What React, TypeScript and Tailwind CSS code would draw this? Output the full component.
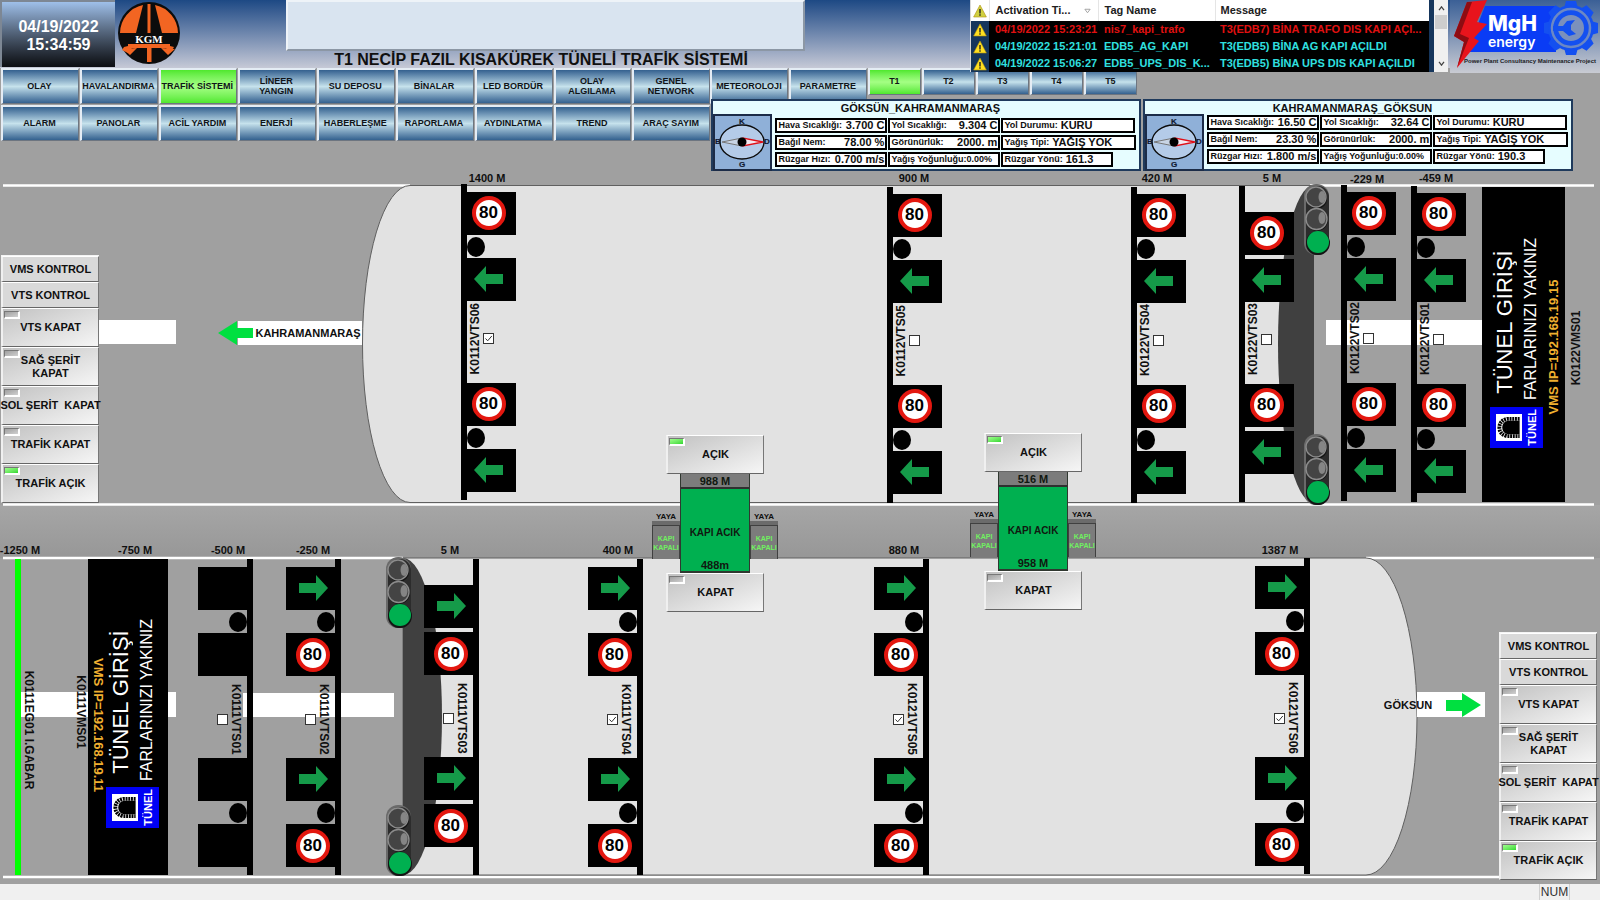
import { ReactNode } from 'react'
import clsx from 'clsx'

// the diagram starts below the weather panels
const TOP = 171

const at = (x: number, y: number) => ({ left: `${x / 16}%`, top: y - TOP })

const navTop = ['OLAY', 'HAVALANDIRMA', 'TRAFİK SİSTEMİ', 'LİNEER\nYANGIN', 'SU DEPOSU', 'BİNALAR', 'LED BORDÜR', 'OLAY\nALGILAMA', 'GENEL\nNETWORK']
const navBottom = ['ALARM', 'PANOLAR', 'ACİL YARDIM', 'ENERJİ', 'HABERLEŞME', 'RAPORLAMA', 'AYDINLATMA', 'TREND', 'ARAÇ SAYIM']
const tunnels = ['T1', 'T2', 'T3', 'T4', 'T5']

const alarms = [
    { time: '04/19/2022 15:23:21', tag: 'nis7_kapi_trafo', message: 'T3(EDB7) BİNA TRAFO DIS KAPI AÇI...', color: 'text-[#e01010]' },
    { time: '04/19/2022 15:21:01', tag: 'EDB5_AG_KAPI', message: 'T3(EDB5) BİNA AG KAPI AÇILDI', color: 'text-[#30e0e0]' },
    { time: '04/19/2022 15:06:27', tag: 'EDB5_UPS_DIS_K...', message: 'T3(EDB5) BİNA UPS DIS KAPI AÇILDI', color: 'text-[#30e0e0]' },
]

const controls = [
    { text: 'VTS KAPAT', on: false },
    { text: 'SAĞ ŞERİT\nKAPAT', on: false },
    { text: 'SOL ŞERİT  KAPAT', on: false },
    { text: 'TRAFİK KAPAT', on: false },
    { text: 'TRAFİK AÇIK', on: true },
]

type PostData = {
    id: string
    x: number
    y: number
    pad: number
    checked?: boolean
    short?: boolean
    blank?: boolean
}

const upperPosts: PostData[] = [
    { id: 'K0112VTS06', x: 461, y: 184, pad: 8, checked: true },
    { id: 'K0112VTS05', x: 887, y: 187, pad: 7 },
    { id: 'K0122VTS04', x: 1131, y: 187, pad: 7 },
    { id: 'K0122VTS03', x: 1239, y: 186, pad: 26, short: true },
    { id: 'K0122VTS02', x: 1341, y: 185, pad: 7 },
    { id: 'K0122VTS01', x: 1411, y: 186, pad: 7 },
]

const lowerPosts: PostData[] = [
    { id: 'K0111VTS01', x: 198, y: 559, pad: 8, blank: true },
    { id: 'K0111VTS02', x: 286, y: 559, pad: 8 },
    { id: 'K0111VTS03', x: 424, y: 559, pad: 26, short: true },
    { id: 'K0111VTS04', x: 588, y: 559, pad: 8, checked: true },
    { id: 'K0121VTS05', x: 874, y: 559, pad: 8, checked: true },
    { id: 'K0121VTS06', x: 1255, y: 558, pad: 8, checked: true },
]

const distances = [
    { text: '1400 M', x: 487, y: 178 },
    { text: '900 M', x: 914, y: 178 },
    { text: '420 M', x: 1157, y: 178 },
    { text: '5 M', x: 1272, y: 178 },
    { text: '-229 M', x: 1367, y: 179 },
    { text: '-459 M', x: 1436, y: 178 },
    { text: '-1250 M', x: 20, y: 550 },
    { text: '-750 M', x: 135, y: 550 },
    { text: '-500 M', x: 228, y: 550 },
    { text: '-250 M', x: 313, y: 550 },
    { text: '5 M', x: 450, y: 550 },
    { text: '400 M', x: 618, y: 550 },
    { text: '880 M', x: 904, y: 550 },
    { text: '1387 M', x: 1280, y: 550 },
]

function NavButton({ text, active, small }: { text: string, active?: boolean, small?: boolean }) {
    return (
        <button
            className={clsx(
                'flex items-center justify-center border-t-2 border-l-2 border-r border-b border-t-[#e4ecf4] border-l-[#e4ecf4] border-r-[#6d7580] border-b-[#6d7580] pr-[2px] pb-[2px] text-center text-[9px] leading-[10px] font-bold whitespace-pre text-[#101418]',
                small ? 'h-[27px]' : 'h-[36px]',
                active
                    ? 'bg-linear-to-b from-[#4fe82c] via-[#a4ff84] to-[#4fe82c]'
                    : 'bg-linear-to-b from-[#34618f] via-[#c6e2ec] to-[#34618f]'
            )}
        >
            {text}
        </button>
    )
}

function KgmLogo() {
    return (
        <svg viewBox="0 0 62 62" className="mt-[2px] ml-[3px] h-[62px] w-[62px] shrink-0" aria-label="KGM">
            <circle cx="31" cy="31" r="31" fill="#0c0c0c" />
            <path d="M2 31A29 29 0 0 1 25 3L18 31ZM37 3A29 29 0 0 1 60 31H44Z" fill="#f26522" />
            <path d="M29.500 2h3v29h-3z" fill="#f26522" />
            <path d="M6 45L10 44V42H52V44L56 45L52 51L48 46H14L10 51L4 48ZM29 42h4.500v18h-4.500z" fill="#f26522" />
            <path d="M5 47L19 46L12 53ZM57 47L43 46L50 53Z" fill="#f26522" />
            <text x="31" y="41" textAnchor="middle" fill="#fff" fontSize="11" fontWeight="700" fontFamily="Liberation Serif, serif">KGM</text>
        </svg>
    )
}

function MghLogo() {
    return (
        <div className="h-[73px] w-[150px] shrink-0 bg-linear-to-b from-[#3b6096] to-[#c9cbd3]">
            <svg viewBox="0 0 150 73" className="h-[73px] w-[150px]" aria-label="MgH energy">
                <path d="M35 6H106V52H17Z" fill="#0a3cf5" />
                <g fill="#1450f0">
                    {[0, 45, 90, 135].map(deg => (
                        <path key={deg} d="M116 1H126L128 8V48L126 55H116L114 48V8Z" transform={`rotate(${deg} 121 28)`} />
                    ))}
                    <circle cx="121" cy="28" r="23" />
                </g>
                <circle cx="121" cy="28" r="19" fill="none" stroke="#6c88c4" strokeWidth="2.500" />
                <circle cx="121" cy="28" r="13" fill="#7b90bc" />
                <path d="M103 26H113L117 21L125 20L121 25V30L126 34L119 36L113 31H103Z" fill="#1450f0" />
                <path d="M17 2L37 0L27 22L37 24L24 38L29 41L7 68L14 42L4 36Z" fill="#e8141c" />
                <path d="M17 2L22 2L10 34L19 38L7 68L14 42L4 36Z" fill="#8e0c12" />
                <g fill="#fff" fontFamily="Inter, Liberation Sans, sans-serif" fontWeight="800">
                    <text x="38" y="31" fontSize="21">MgH</text>
                    <text x="38" y="47" fontSize="14" fontWeight="600">energy</text>
                </g>
                <text x="14" y="63" fontSize="6" fontWeight="700" fill="#1c1c24">Power Plant Consultancy Maintenance Project</text>
            </svg>
        </div>
    )
}

function Warning({ dim }: { dim?: boolean }) {
    return (
        <svg viewBox="0 0 14 14" className="mx-auto h-[14px] w-[14px]">
            <path d="M7 1L13.400 13H.6Z" fill={dim ? '#d0d040' : '#ffdf20'} stroke="#b09010" strokeWidth=".6" />
            <path d="M6.300 5h1.400v4.500H6.300zM6.300 10.300h1.400v1.400H6.300z" fill="#202020" />
        </svg>
    )
}

function AlarmList() {
    return (
        <div className="relative z-10 flex h-[72px] w-[478px] shrink-0 border-l border-[#d8d8d8] bg-[#16365c]">
            <table className="w-[458px] table-fixed bg-black text-left text-[11px] leading-[17px] font-bold whitespace-nowrap">
                <thead>
                    <tr className="h-[21px] bg-white text-[#202020]">
                        <th className="w-[18px]"><Warning dim /></th>
                        <th className="w-[109px] border-l border-[#e5e5e5] pl-[6px]">
                            <div className="flex items-center justify-between pr-[7px]">
                                Activation Ti...
                                <svg viewBox="0 0 8 6" className="h-[6px] w-[7px]"><path d="M1 1H7L4 5Z" fill="none" stroke="#999" /></svg>
                            </div>
                        </th>
                        <th className="w-[117px] border-l border-[#e5e5e5] pl-[6px]">Tag Name</th>
                        <th className="border-l border-[#e5e5e5] pl-[5px]">Message</th>
                    </tr>
                </thead>
                <tbody>
                    {alarms.map(a => (
                        <tr key={a.time} className={clsx('h-[17px]', a.color)}>
                            <td className="bg-[#16365c]"><Warning /></td>
                            <td className="pl-[6px]">{a.time}</td>
                            <td className="pl-[6px]">{a.tag}</td>
                            <td className="pl-[5px]">{a.message}</td>
                        </tr>
                    ))}
                </tbody>
            </table>
            <div className="ml-auto flex w-[14px] flex-col items-center bg-[#f0f0f0] py-[6px]">
                <svg viewBox="0 0 8 6" className="h-[5px] w-[7px]"><path d="M1 5L4 1L7 5" fill="none" stroke="#444" strokeWidth="1.500" /></svg>
                <div className="mt-[4px] h-[14px] w-[12px] bg-[#cdcdcd]" />
                <svg viewBox="0 0 8 6" className="mt-auto h-[5px] w-[7px]"><path d="M1 1L4 5L7 1" fill="none" stroke="#444" strokeWidth="1.500" /></svg>
            </div>
        </div>
    )
}

function Compass() {
    return (
        <div className="h-[57px] w-[59px] shrink-0 border-2 border-[#1c2c48] bg-[#8fb0d8]">
            <svg viewBox="2 2 55 53" className="h-[53px] w-[55px]">
                <ellipse cx="29" cy="28" rx="22" ry="17" fill="#b4cbe8" stroke="#0c0c0c" strokeWidth="1.400" />
                <path d="M9 28L29 24V32Z" fill="#c8d4e4" stroke="#777" />
                <path d="M50 28L30 24V32Z" fill="#f4e8f0" stroke="#e01018" strokeWidth="1.400" />
                <circle cx="29" cy="28" r="4.500" fill="#000" />
                <g fontSize="8" fill="#101830" stroke="#101830" strokeWidth=".2" textAnchor="middle">
                    <text x="29" y="10">K</text>
                    <text x="29" y="53">G</text>
                    <text x="5" y="30">B</text>
                    <text x="54" y="30">D</text>
                </g>
            </svg>
        </div>
    )
}

function Reading({ label, value, spread, className }: { label: string, value: string, spread?: boolean, className?: string }) {
    return (
        <div className={clsx('flex h-[15px] items-center border-2 border-black bg-white px-px whitespace-nowrap', spread ? 'justify-between' : 'gap-[3px]', className)}>
            <dt className="text-[9px] leading-[11px]">{label}</dt>
            <dd className="text-[11px] leading-[11px]">{value}</dd>
        </div>
    )
}

function Weather({ title, values, tight }: { title: string, values: string[], tight?: boolean }) {
    return (
        <section className="flex h-[72px] w-[430px] flex-col border-2 border-[#1f3a5c] bg-[#e6fdff] font-bold text-[#101010]">
            <h2 className="-mb-px h-[14px] pr-[22px] pl-[10px] text-center text-[11px] leading-[14px]">{title}</h2>
            <div className="flex gap-[3px]">
                <Compass />
                <dl className={clsx('grid grow grid-cols-[112px_112px_135px] grid-rows-[15px_15px_15px] gap-x-px gap-y-[2px] pb-px', tight ? 'pt-px' : 'pt-[4px]')}>
                    <Reading spread label="Hava Sıcaklığı:" value={values[0]} />
                    <Reading spread label="Yol Sıcaklığı:" value={values[1]} />
                    <Reading label="Yol Durumu:" value={values[2]} className="mr-px" />
                    <Reading spread label="Bağıl Nem:" value={values[3]} />
                    <Reading spread label="Görünürlük:" value={values[4]} />
                    <Reading label="Yağış Tipi:" value={values[5]} />
                    <Reading spread label="Rüzgar Hızı:" value={values[6]} />
                    <div className="flex h-[15px] items-center border-2 border-black bg-white px-px text-[9px] leading-[11px] whitespace-nowrap">
                        <dt>Yağış Yoğunluğu:</dt>
                        <dd>0.00%</dd>
                    </div>
                    <Reading label="Rüzgar Yönü:" value={values[7]} className="mr-[23px]" />
                </dl>
            </div>
        </section>
    )
}

function LampButton({ text, on, className }: { text: string, on: boolean, className?: string }) {
    return (
        <button
            className={clsx(
                'relative flex h-[39px] w-[98px] items-center justify-center border-t border-l-2 border-r border-b border-t-white border-l-[#f0f0f0] border-r-[#777] border-b-[#666] bg-linear-to-br from-[#c2c2c2] to-[#f6f6f6] text-center text-[11px] leading-[13px] font-bold whitespace-pre text-[#101010]',
                className
            )}
        >
            <span
                className={clsx(
                    'absolute top-[2px] left-px h-[8px] w-[16px] border-t border-l border-r-2 border-b-2 border-t-[#777] border-l-[#777] border-r-white border-b-white',
                    on ? 'bg-linear-to-br from-[#9dff8c] to-[#2ed82e]' : 'bg-linear-to-br from-[#a0a0a0] to-[#d0d0d0]'
                )}
            />
            {text}
        </button>
    )
}

function ControlPanel({ x, y }: { x: number, y: number }) {
    return (
        <div className="absolute flex flex-col border-t border-[#f4f4f4]" style={at(x, y)}>
            {['VMS KONTROL', 'VTS KONTROL'].map(text => (
                <button key={text} className="h-[26px] w-[98px] border-t border-l-2 border-r border-b border-t-white border-l-[#f0f0f0] border-r-[#777] border-b-[#666] bg-[#d9d9d9] text-[11px] font-bold text-[#101010]">
                    {text}
                </button>
            ))}
            {controls.map(c => <LampButton key={c.text} {...c} />)}
        </div>
    )
}

function Speed({ right, blank }: { right?: boolean, blank?: boolean }) {
    return (
        <div className={clsx('flex h-[43px] w-[49px] items-center justify-center bg-black', right ? 'pl-[4px]' : 'pr-[6px] pb-[2px]')}>
            {!blank && (
                <div className="flex h-[34px] w-[34px] shrink-0 items-center justify-center rounded-full border-4 border-[#e3170f] bg-white text-[17px] leading-none font-bold text-black">80</div>
            )}
        </div>
    )
}

function Lane({ right, blank }: { right?: boolean, blank?: boolean }) {
    return (
        <div className={clsx('flex h-[43px] w-[49px] items-center justify-center bg-black pb-[2px]', right ? 'pl-[6px]' : 'pr-[6px]')}>
            {!blank && (
                <svg viewBox="0 0 29 26" className={clsx('h-[26px] w-[29px]', right && 'rotate-180')}>
                    <path d="M0 13L12 0V8H29V18H12V26Z" fill="#159a49" />
                </svg>
            )}
        </div>
    )
}

function Check({ id, checked }: { id: string, checked?: boolean }) {
    return (
        <span className="relative flex h-[11px] w-[11px]">
            <input id={id} type="checkbox" defaultChecked={checked} className="peer h-[11px] w-[11px] appearance-none border border-[#333] bg-white" />
            <svg viewBox="0 0 11 11" className="pointer-events-none absolute inset-0 hidden h-[11px] w-[11px] peer-checked:block">
                <path d="M2.500 5.500L4.700 7.800L8.800 3" fill="none" stroke="#333" />
            </svg>
        </span>
    )
}

function Post({ post, right }: { post: PostData, right?: boolean }) {
    const gap = (
        <div className={clsx('flex items-center', post.short ? 'h-[4px]' : 'h-[23px]', right ? 'justify-end' : 'justify-start')}>
            {!post.short && <span className="h-[20px] w-[18px] rounded-[50%] bg-black" />}
        </div>
    )
    const first = right ? <Lane right blank={post.blank} /> : <Speed />
    const second = right ? <Speed right blank={post.blank} /> : <Lane />
    return (
        <div className={clsx('absolute flex h-[316px]', right && 'flex-row-reverse')} style={at(post.x, post.y)}>
            <div className="w-[6px] bg-black" />
            <div className="flex flex-col" style={{ paddingTop: post.pad }}>
                {first}
                {gap}
                {second}
                <div className={clsx('flex h-[82px] items-center', right ? 'flex-row-reverse pt-[4px] pr-[3px]' : 'pb-[7px]')}>
                    <label htmlFor={post.id} className={clsx('w-[16px] text-[12px] leading-[16px] font-bold whitespace-nowrap text-[#101010] [writing-mode:vertical-rl]', !right && 'rotate-180')}>
                        {post.id}
                    </label>
                    <Check id={post.id} checked={post.checked} />
                </div>
                {first}
                {gap}
                {second}
            </div>
        </div>
    )
}

function TrafficLight({ x, y }: { x: number, y: number }) {
    return (
        <svg viewBox="0 0 26 72" className="absolute h-[72px] w-[26px]" style={at(x, y)}>
            <rect x="0" y="0" width="25" height="71" rx="12" fill="#6a6a6a" />
            <rect x="2" y="2" width="23" height="69" rx="11" fill="#2c2c2c" />
            <circle cx="13" cy="15" r="10" fill="#141414" />
            <circle cx="12" cy="13" r="10" fill="#444" stroke="#8c8c8c" strokeWidth="1.400" />
            <ellipse cx="18" cy="13" rx="3.500" ry="6" fill="#858585" />
            <circle cx="13" cy="36" r="11" fill="#141414" />
            <circle cx="12.500" cy="35" r="10.500" fill="#444" stroke="#8c8c8c" strokeWidth="1.400" />
            <ellipse cx="18" cy="34" rx="3.500" ry="6" fill="#858585" />
            <circle cx="14" cy="59" r="12" fill="#141414" />
            <circle cx="14" cy="58" r="11" fill="#00b050" />
        </svg>
    )
}

function Vertical({ x, y, up, className, children }: { x: number, y: number, up?: boolean, className: string, children: ReactNode }) {
    return (
        <div className="absolute -translate-x-1/2 -translate-y-1/2" style={at(x, y)}>
            <div className={clsx('whitespace-nowrap [writing-mode:vertical-rl]', up && 'rotate-180', className)}>{children}</div>
        </div>
    )
}

function TunnelSign({ x, y }: { x: number, y: number }) {
    return (
        <div className="absolute flex h-[41px] w-[53px] items-center gap-[3px] bg-[#0000f5] pl-[6px]" style={at(x, y)}>
            <svg viewBox="0 0 26 28" className="h-[27px] w-[26px] bg-white">
                <path d="M24 5H11Q3 7 3 14T11 23H24" fill="none" stroke="#000" strokeWidth="4" strokeDasharray="2 .8" />
                <path d="M24 7H12Q6 8 6 14T12 21H24Z" fill="#000" />
            </svg>
            <span className="rotate-180 text-[11px] leading-[15px] font-bold text-white [writing-mode:vertical-rl]">TÜNEL</span>
        </div>
    )
}

function Pedestrian() {
    return (
        <div className="flex w-[28px] flex-col text-center font-bold">
            <span className="text-[8px] leading-[9px] text-[#101010]">YAYA</span>
            <span className="h-[5px] border-b border-[#404040] bg-[#6b6b6b]" />
            <span className="flex h-[33px] items-center justify-center border-x border-[#404040] bg-[#7c7c7c] text-[7px] leading-[9px] text-[#70f060]">
                KAPI
                <br />
                KAPALI
            </span>
        </div>
    )
}

function Door({ x, y, top, bottom }: { x: number, y: number, top: string, bottom: string }) {
    return (
        <div className="absolute flex w-[126px] flex-col items-center" style={at(x, y)}>
            <LampButton text="AÇIK" on />
            <div className="flex items-end">
                <div className="pb-[14px]"><Pedestrian /></div>
                <div className="flex h-[99px] w-[70px] flex-col border-x border-b-2 border-[#303830] bg-[#00b050] text-center text-[11px] font-bold text-[#101810]">
                    <span className="h-[15px] border-b-2 border-[#303030] bg-[#7c7c7c] leading-[14px]">{top}</span>
                    <span className="flex grow items-center justify-center pt-[16px] text-[10px]">KAPI ACIK</span>
                    <span className="h-[12px] leading-[12px]">{bottom}</span>
                </div>
                <div className="pb-[14px]"><Pedestrian /></div>
            </div>
            <LampButton text="KAPAT" on={false} />
        </div>
    )
}

function Roads() {
    return (
        <svg viewBox="0 171 1600 713" preserveAspectRatio="none" className="absolute inset-0 h-full w-full">
            <defs>
                <linearGradient id="median" x1="0" y1="0" x2="0" y2="1">
                    <stop offset="0" stopColor="#a6a6a6" />
                    <stop offset="1" stopColor="#979797" />
                </linearGradient>
            </defs>
            <rect x="0" y="505" width="1600" height="53" fill="url(#median)" />
            <path d="M3 185.500H410M1310 185.500H1594M3 504.500H1594M3 558H403M1366 558H1594M3 877H1594" stroke="#fff" strokeWidth="2.500" />
            <path d="M1312 185.500H410A47.500 158.500 0 0 0 410 502.500H1312Z" fill="#e2e2e2" stroke="#606060" />
            <path d="M1314 185A36 159 0 0 0 1314 503Z" fill="#404040" />
            <path d="M403 558H1366A51 158.500 0 0 1 1366 875H403Z" fill="#e2e2e2" stroke="#606060" />
            <path d="M403 558A39 158.500 0 0 1 403 875Z" fill="#404040" />
            <path d="M99 320H176V344H99ZM238 321H362V345H238ZM1326 320H1482V345H1326ZM21 692H176V717H21ZM243 693H394V717H243ZM1417 692H1485V717H1417Z" fill="#fff" />
            <path d="M218 333L237 321V328H253V338H237V345Z" fill="#00e040" />
            <path d="M1481 705L1462 693V700H1446V711H1462V717Z" fill="#00e040" />
            <path d="M1482 187H1565V502H1482ZM88 559H168V875H88Z" fill="#000" />
            <path d="M15 559H21V875H15Z" fill="#00ff00" />
        </svg>
    )
}

function Diagram() {
    return (
        <main className="relative h-[713px] overflow-hidden">
            <Roads />
            {distances.map(d => (
                <span key={d.text + d.y} className="absolute -translate-x-1/2 -translate-y-1/2 text-[11px] leading-[12px] font-bold whitespace-nowrap text-[#101010]" style={at(d.x, d.y)}>
                    {d.text}
                </span>
            ))}
            {upperPosts.map(p => <Post key={p.id} post={p} />)}
            {lowerPosts.map(p => <Post key={p.id} post={p} right />)}

            <TrafficLight x={1304} y={184} />
            <TrafficLight x={1304} y={434} />
            <TrafficLight x={386} y={557} />
            <TrafficLight x={386} y={805} />

            <Vertical x={1505} y={322} up className="text-[22px] leading-[24px] text-white">TÜNEL GİRİŞİ</Vertical>
            <Vertical x={1531} y={319} up className="text-[16px] leading-[18px] text-white">FARLARINIZI YAKINIZ</Vertical>
            <Vertical x={1554} y={347} up className="text-[13px] leading-[16px] font-bold text-[#f0b030]">VMS IP=192.168.19.15</Vertical>
            <Vertical x={1576} y={348} up className="text-[12px] leading-[16px] font-bold text-[#101010]">K0122VMS01</Vertical>
            <TunnelSign x={1490} y={407} />

            <Vertical x={121} y={702} up className="text-[22px] leading-[24px] text-white">TÜNEL GİRİŞİ</Vertical>
            <Vertical x={147} y={700} up className="text-[16px] leading-[18px] text-white">FARLARINIZI YAKINIZ</Vertical>
            <Vertical x={98} y={725} className="text-[13px] leading-[16px] font-bold text-[#f0b030]">VMS IP=192.168.19.11</Vertical>
            <Vertical x={81} y={712} className="text-[12px] leading-[16px] font-bold text-[#101010]">K0111VMS01</Vertical>
            <Vertical x={29} y={730} className="text-[12px] leading-[16px] font-bold text-[#101010]">K0111EG01 I.GABAR</Vertical>
            <TunnelSign x={106} y={787} />

            <span className="absolute -translate-x-1/2 text-[11px] leading-[14px] font-bold text-[#101010]" style={at(308, 326)}>KAHRAMANMARAŞ</span>
            <span className="absolute -translate-x-1/2 text-[11px] leading-[14px] font-bold text-[#101010]" style={at(1408, 698)}>GÖKSUN</span>

            <Door x={652} y={435} top="988 M" bottom="488m" />
            <Door x={970} y={433} top="516 M" bottom="958 M" />

            <ControlPanel x={1} y={255} />
            <ControlPanel x={1499} y={632} />
        </main>
    )
}

function App() {
    return (
        <div className="min-h-screen bg-[#a0a0a0] font-['Liberation_Sans',Arial,sans-serif]">
            <header className="flex h-[68px] bg-linear-to-b from-[#1d4984] to-[#c6c9d6]">
                <div className="h-[67px] w-[115px] shrink-0 border-t-2 border-l-2 border-[#7d8794] bg-linear-to-b from-[#9fc0ea] to-[#0c0e12] pt-[16px] text-center text-[16px] leading-[18px] font-bold text-white">
                    04/19/2022
                    <br />
                    15:34:59
                </div>
                <KgmLogo />
                <div className="ml-[106px] flex w-[519px] shrink-0 flex-col">
                    <input aria-label="Mesaj" className="h-[52px] w-full border-2 border-t-[#eef3f8] border-r-[#8c97a5] border-b-[#8c97a5] border-l-[#eef3f8] bg-[#d9e4f0]" />
                    <h1 className="pr-[9px] text-center text-[16px] leading-[17px] font-bold whitespace-nowrap text-[#101010]">
                        T1 NECİP FAZIL KISAKÜREK TÜNELİ TRAFİK SİSTEMİ
                    </h1>
                </div>
                <div className="ml-auto flex gap-[2px]">
                    <AlarmList />
                    <MghLogo />
                </div>
            </header>

            <div className="flex h-[103px]">
                <nav className="grid w-[44.4%] shrink-0 auto-rows-[36px] grid-cols-9 gap-x-px gap-y-px pl-px">
                    {navTop.map(t => <NavButton key={t} text={t} active={t === 'TRAFİK SİSTEMİ'} />)}
                    {navBottom.map(t => <NavButton key={t} text={t} />)}
                </nav>
                <div className="grow">
                    <div className="flex h-[31px] gap-px">
                        <div className="grid grid-cols-[78px_78px] gap-px">
                            <NavButton text="METEOROLOJI" />
                            <NavButton text="PARAMETRE" />
                        </div>
                        <div className="grid grid-cols-[53px_53px_53px_53px_53px] gap-px">
                            {tunnels.map(t => <NavButton key={t} text={t} small active={t === 'T1'} />)}
                        </div>
                    </div>
                    <div className="relative flex gap-[2px] pl-px">
                        <Weather title="GÖKSÜN_KAHRAMANMARAŞ" values={['3.700 C', '9.304 C', 'KURU', '78.00 %', '2000. m', 'YAĞIŞ YOK', '0.700 m/s', '161.3']} />
                        <Weather tight title="KAHRAMANMARAŞ_GÖKSUN" values={['16.50 C', '32.64 C', 'KURU', '23.30 %', '2000. m', 'YAĞIŞ YOK', '1.800 m/s', '190.3']} />
                    </div>
                </div>
            </div>

            <Diagram />

            <footer className="flex h-[16px] justify-end bg-[#f0f0f0] pr-[30px] text-[12px] leading-[16px] text-[#303030]">
                <span className="w-[31px] border-x border-[#d0d0d0] text-center">NUM</span>
            </footer>
        </div>
    )
}

export default App
